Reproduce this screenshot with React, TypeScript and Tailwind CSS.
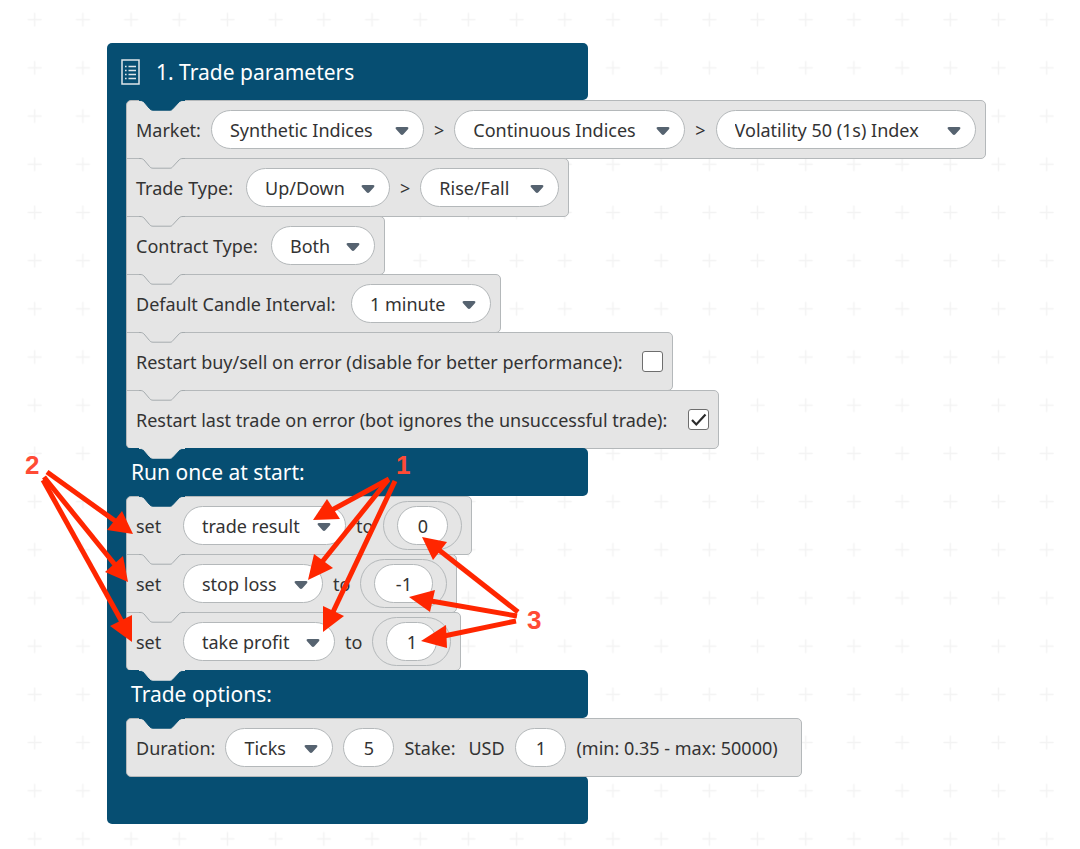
import React from 'react';

const NOTCH_EDGE = 'M0 0 H1 C3 0 4 0.5 5 1.5 L10.5 8 C11.5 9.2 12.5 9.7 14 9.7 H31 C32.5 9.7 33 9.2 34 8 L40 1.5 C41 0.5 42 0 44 0 H46';
const NOTCH_FILL = 'M2 -0.5 H43 V0 L40 1.5 L34 8 C33 9.2 32.5 9.7 31 9.7 H14 C12.5 9.7 11.5 9.2 10.5 8 L5 1.5 L2 0 Z';

interface NotchProps {
  className: string;
}

// The connector tab of the block above, drawn over the top edge of a block
const Notch: React.FC<NotchProps> = ({ className }) => (
  <svg className={`absolute -top-px left-[12px] h-[11px] w-[46px] ${className}`} viewBox="0 -0.5 46 11" aria-hidden="true">
    <path d={NOTCH_FILL} stroke="none" />
    <path d={NOTCH_EDGE} strokeWidth="1" fill="none" />
  </svg>
);

interface BlockProps {
  first?: boolean;
  children: React.ReactNode;
}

const Block: React.FC<BlockProps> = ({ first = false, children }) => (
  <div className="relative -mb-px flex h-[59px] w-max items-center gap-[10px] whitespace-nowrap rounded-r-[5px] border border-[#b4b8ba] bg-[#e5e5e5] px-[9px] first:rounded-tl-[5px] last:rounded-bl-[5px]">
    <Notch className={first ? 'fill-[#064e72] stroke-[#064e72]' : 'fill-[#e5e5e5] stroke-[#a5abae]'} />
    {children}
  </div>
);

const Stack: React.FC<{ children: React.ReactNode }> = ({ children }) => (
  <div className="bg-linear-to-r from-[#064e72] from-[26px] to-transparent to-[26px] pb-px pl-[19px]">
    {children}
  </div>
);

const SectionBar: React.FC<{ title: string }> = ({ title }) => (
  <div className="relative -mt-px h-12 w-[481px] rounded-r-[5px] bg-[#064e72] pl-6 pt-[10px]">
    <div className="absolute left-[20px] top-px">
      <Notch className="fill-[#e5e5e5] stroke-[#e5e5e5]" />
    </div>
    <h2 className="text-[21px] leading-7 text-white">{title}</h2>
  </div>
);

interface DropdownProps {
  id?: string;
  label?: string;
  value: string;
  width: string;
}

const Dropdown: React.FC<DropdownProps> = ({ id, label, value, width }) => (
  <div className={`relative ${width}`}>
    <select
      id={id}
      aria-label={label}
      className="block h-[39px] w-full appearance-none rounded-full border border-[#b4b8ba] bg-white pl-[18px] text-[#333333] outline-none"
    >
      <option>{value}</option>
    </select>
    <svg className="pointer-events-none absolute right-[15px] top-[16px] h-[10px] w-[14px] fill-[#566370]" viewBox="0 0 14 10" aria-hidden="true">
      <path d="M2 1 H12 C13.6 1 13.8 2.4 12.9 3.3 L8.4 8.3 C7.6 9.1 6.4 9.1 5.6 8.3 L1.1 3.3 C0.2 2.4 0.4 1 2 1 Z" />
    </svg>
  </div>
);

const ValueInput: React.FC<DropdownProps> = ({ id, label, value, width }) => (
  <input
    id={id}
    aria-label={label}
    type="text"
    defaultValue={value}
    className={`h-[39px] rounded-full border border-[#b4b8ba] bg-white text-center text-[#333333] outline-none ${width}`}
  />
);

interface ToggleProps {
  id: string;
  label: string;
  width: string;
  checked?: boolean;
}

const Toggle: React.FC<ToggleProps> = ({ id, label, width, checked = false }) => (
  <>
    <label htmlFor={id} className={width}>{label}</label>
    <div className="relative">
      <input
        id={id}
        type="checkbox"
        defaultChecked={checked}
        className="peer block size-[21px] appearance-none rounded-[3px] border-[1px] border-[#6e6e6e] bg-white"
      />
      <svg className="pointer-events-none absolute inset-0 hidden size-[21px] fill-none stroke-[#2b2b2b] peer-checked:block" viewBox="0 0 21 21" aria-hidden="true">
        <path d="M4 11 L8.3 15.5 L17.5 5.5" strokeWidth="2.2" />
      </svg>
    </div>
  </>
);

const VARIABLES = [
  { name: 'trade result', value: '0', width: 'w-[163px]', valueWidth: 'w-[51px]' },
  { name: 'stop loss', value: '-1', width: 'w-[140px]', valueWidth: 'w-[59px]' },
  { name: 'take profit', value: '1', width: 'w-[152px]', valueWidth: 'w-[51px]' },
];

const ARROWS = [
  { from: [47, 472], to: [118, 523], head: '133,534 122,511 107,530' },
  { from: [44, 477], to: [116, 566], head: '128,582 123,556 105,572' },
  { from: [43, 480], to: [122, 622], head: '132,642 132,615 110,626' },
  { from: [389, 479], to: [332, 510], head: '313,520 327,499 340,519' },
  { from: [388, 480], to: [322, 562], head: '308,580 314,554 333,568' },
  { from: [395, 481], to: [333, 612], head: '323,632 323,606 344,616' },
  { from: [518, 612], to: [439, 550], head: '422,537 447,542 433,560' },
  { from: [517, 616], to: [431, 601], head: '409,597 435,590 430,612' },
  { from: [516, 621], to: [444, 636], head: '421,641 446,625 447,648' },
];

const Annotations: React.FC = () => (
  <div className="pointer-events-none absolute left-0 top-0 font-['Liberation_Sans',sans-serif] text-[26px] font-bold leading-7 text-[#ff4b35]">
    <svg className="h-[700px] w-[600px] fill-[#ff2600] stroke-[#ff2600]" viewBox="0 0 600 700" aria-hidden="true">
      {ARROWS.map(({ from, to, head }) => (
        <g key={head}>
          <line x1={from[0]} y1={from[1]} x2={to[0]} y2={to[1]} strokeWidth="5" />
          <polygon points={head} stroke="none" />
        </g>
      ))}
    </svg>
    <span className="absolute left-[396px] top-[451px]">1</span>
    <span className="absolute left-[25px] top-[451px]">2</span>
    <span className="absolute left-[527px] top-[606px]">3</span>
  </div>
);

const Grid: React.FC = () => (
  <svg className="absolute inset-0 h-full w-full" aria-hidden="true">
    <defs>
      <pattern id="grid" x="10.6" y="-4.4" width="48.19" height="48.19" patternUnits="userSpaceOnUse">
        <path d="M24.1 17.1 V31.1 M17.1 24.1 H31.1" className="stroke-[#f3f3f3]" strokeWidth="1.5" />
      </pattern>
    </defs>
    <rect width="100%" height="100%" fill="url(#grid)" />
  </svg>
);

const App: React.FC = () => {
  return (
    <main className="relative min-h-screen bg-white pb-6 pl-[107px] pt-[43px] font-['Noto_Sans',sans-serif] text-[18px] leading-6 text-[#333333]">
      <Grid />
      <div className="relative">
        <header className="flex h-[57px] w-[481px] items-center gap-[16px] rounded-r-[5px] rounded-tl-[5px] bg-[#064e72] pl-[14px]">
          <svg className="h-[26px] w-[19px] fill-none stroke-[#dfe6ea]" viewBox="0 0 19 26" aria-hidden="true">
            <rect x="1" y="1" width="17" height="24" strokeWidth="1.5" />
            <path d="M7.5 7.5 H15 M7.5 11.5 H15 M7.5 15.5 H15 M7.5 19.5 H15" strokeWidth="1.6" />
            <path d="M4 7.5 H5.6 M4 11.5 H5.6 M4 15.5 H5.6 M4 19.5 H5.6" strokeWidth="1.6" />
          </svg>
          <h1 className="text-[21px] leading-7 text-white">1. Trade parameters</h1>
        </header>

        <Stack>
          <Block first>
            <label htmlFor="market">Market:</label>
            <Dropdown id="market" value="Synthetic Indices" width="w-[213px]" />
            <span>&gt;</span>
            <Dropdown label="Submarket" value="Continuous Indices" width="w-[231px]" />
            <span>&gt;</span>
            <Dropdown label="Symbol" value="Volatility 50 (1s) Index" width="w-[260px]" />
          </Block>
          <Block>
            <label htmlFor="trade-type" className="w-[100px]">Trade Type:</label>
            <Dropdown id="trade-type" value="Up/Down" width="w-[144px]" />
            <span>&gt;</span>
            <Dropdown label="Trade subtype" value="Rise/Fall" width="w-[139px]" />
          </Block>
          <Block>
            <label htmlFor="contract-type" className="w-[125px]">Contract Type:</label>
            <Dropdown id="contract-type" value="Both" width="w-[104px]" />
          </Block>
          <Block>
            <label htmlFor="candle" className="w-[205px]">Default Candle Interval:</label>
            <Dropdown id="candle" value="1 minute" width="w-[140px]" />
          </Block>
          <Block>
            <Toggle
              id="restart-buy-sell"
              label="Restart buy/sell on error (disable for better performance):"
              width="w-[496px]"
            />
          </Block>
          <Block>
            <Toggle
              id="restart-last"
              label="Restart last trade on error (bot ignores the unsuccessful trade):"
              width="w-[542px]"
              checked
            />
          </Block>
        </Stack>

        <SectionBar title="Run once at start:" />
        <Stack>
          {VARIABLES.map(({ name, value, width, valueWidth }, i) => (
            <Block key={name} first={i === 0}>
              <span className="w-[37px]">set</span>
              <Dropdown label="Variable" value={name} width={width} />
              <span>to</span>
              <div className="flex h-[49px] items-center rounded-full border border-[#b4b8ba] px-[13px]">
                <ValueInput label={name} value={value} width={valueWidth} />
              </div>
            </Block>
          ))}
        </Stack>

        <SectionBar title="Trade options:" />
        <Stack>
          <Block first>
            <label htmlFor="duration-unit">Duration:</label>
            <Dropdown id="duration-unit" value="Ticks" width="w-[108px]" />
            <ValueInput label="Duration" value="5" width="w-[51px]" />
            <label htmlFor="stake" className="w-[54px]">Stake:</label>
            <span className="w-[37px]">USD</span>
            <ValueInput id="stake" value="1" width="w-[51px]" />
            <span className="w-[216px]">(min: 0.35 - max: 50000)</span>
          </Block>
        </Stack>
        <div className="-mt-px h-12 w-[481px] rounded-b-[5px] rounded-tr-[5px] bg-[#064e72]" />
      </div>
      <Annotations />
    </main>
  );
};

export default App;
